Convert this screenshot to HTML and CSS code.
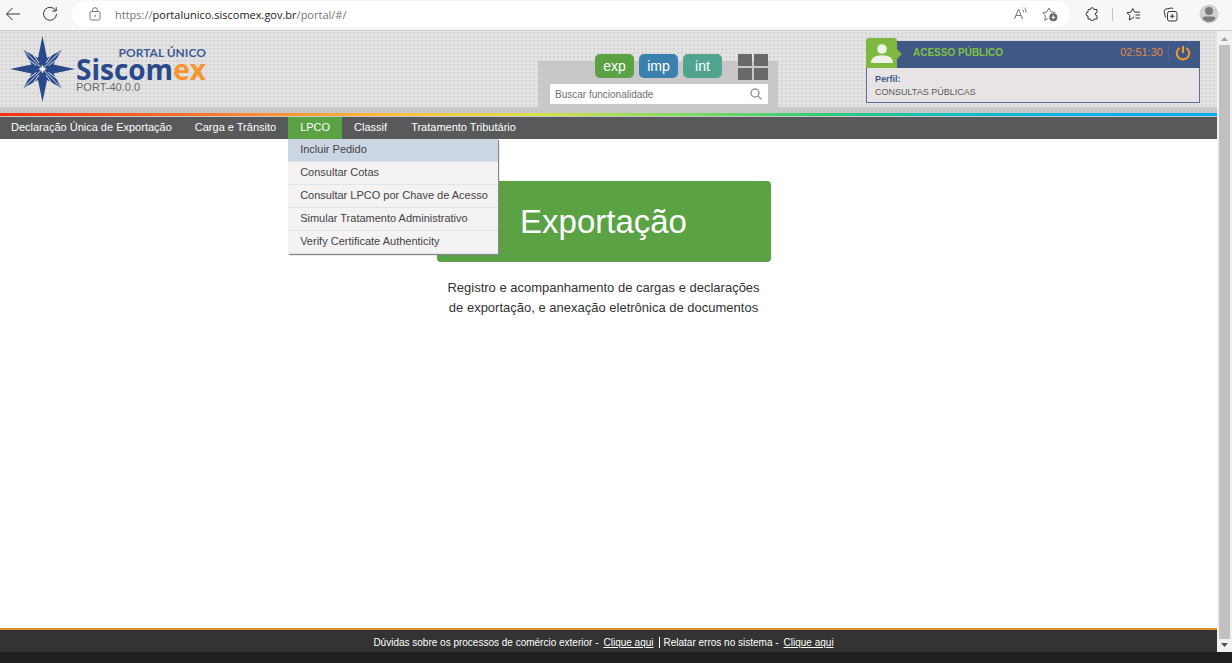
FILE: index.html
```html
<!DOCTYPE html>
<html lang="pt-BR">
<head>
<meta charset="utf-8">
<meta name="viewport" content="width=device-width, initial-scale=1">
<title>Portal Único Siscomex</title>
<link rel="stylesheet" href="styles.css">
</head>
<body>
<div class="browser-bar">
  <button class="icon-btn" type="button" aria-label="Voltar"><svg width="16" height="16" viewBox="0 0 16 16"><path d="M15 8H1.500M7.500 2L1.500 8l6 6"/></svg></button>
  <button class="icon-btn reload" type="button" aria-label="Atualizar"><svg width="16" height="16" viewBox="0 0 16 16"><path d="M13.600 4.500A6.500 6.500 0 1 0 14.500 8M14.200 1.200V5H10.200"/></svg></button>
  <div class="address">
    <svg class="lock" width="12" height="14" viewBox="0 0 12 14"><rect x="1" y="4.500" width="10" height="8.500" rx="1.500"/><path d="M3.500 4.500V3.200a2.500 2.500 0 0 1 5 0v1.300"/><circle cx="6" cy="9" r=".5"/></svg>
    <span class="url">https://<b>portalunico.siscomex.gov.br</b>/portal/#/</span>
    <button class="icon-btn muted" type="button" aria-label="Ler em voz alta"><svg width="16" height="16" viewBox="0 0 16 16"><path d="M2.500 13L6.500 3l4 10M4 9.500h5M10.500 3.500c.8.700 1.200 1.700 1.200 2.800M12 1.500c1.500 1.200 2.200 3 2 5"/></svg></button>
    <button class="icon-btn muted" type="button" aria-label="Adicionar aos favoritos"><svg width="16" height="16" viewBox="0 0 16 16"><path d="M6 12.500l-3.300 1.800.7-4.500L1 6.500l4-.6L7 2l2 3.900 4.300.6"/><circle cx="11.300" cy="11.300" r="4" fill="#666" stroke="none"/><path class="plus" d="M11.300 9.300v4M9.300 11.300h4"/></svg></button>
  </div>
  <button class="icon-btn" type="button" aria-label="Extensões"><svg width="14" height="14" viewBox="0 0 14 14"><path d="M4 2.500H5.500a1.800 1.800 0 0 1 3.600 0H12V5.500a1.600 1.600 0 0 0 0 3.200V12H9.100a1.800 1.800 0 0 1-3.600 0H3V9A1.900 1.900 0 0 1 3 5.200V3.500a1 1 0 0 1 1-1z"/></svg></button>
  <span class="bar-divider"></span>
  <button class="icon-btn" type="button" aria-label="Favoritos"><svg width="15" height="14" viewBox="0 0 15 14"><path d="M8 9.500L7.200 10.800 3.300 13l.7-4.200L1 5.700l4-.6L6.800 1.500l1.800 3.600H14M9.500 8H14M9.500 11H14"/></svg></button>
  <button class="icon-btn collections" type="button" aria-label="Coleções"><svg width="15" height="15" viewBox="0 0 15 15"><rect x="4.500" y="4.500" width="9.500" height="9.500" rx="2"/><path d="M2.500 10.500L1.200 4.500a2 2 0 0 1 1.500-2.300L8 1a2 2 0 0 1 2.300 1.300M9.250 7v4.500M7 9.250h4.500"/></svg></button>
  <button class="icon-btn" type="button" aria-label="Perfil do navegador"><svg width="20" height="20" viewBox="0 0 20 20"><circle cx="10" cy="10" r="9.500" fill="#d2d0ce" stroke="none"/><circle cx="10" cy="7" r="4" fill="#7c7a78" stroke="none"/><path d="M3.500 14.500Q3.500 12.500 6 12.500h8q2.500 0 2.500 2A8 8 0 0 1 3.500 14.500z" fill="#7c7a78" stroke="none"/></svg></button>
</div>

<div class="viewport">
  <div class="page">
    <header class="header">
      <a class="logo" href="#">
        <svg class="star" width="66" height="66" viewBox="0 0 66 66">
          <path fill="#29498b" d="M32.500 0L37 22 51.500 14 43.500 28.500 65 33 43.500 37.500 51.500 52 37 44 32.500 66 28 44 13.500 52 21.500 37.500 0 33 21.500 28.500 13.500 14 28 22z"/>
          <path d="M32.500 33L50 15.500M32.500 33L15 15.500M32.500 33L50 50.500M32.500 33L15 50.500M36 27L43 17M38.500 29.500L48 22.500M29 27L22 17M26.500 29.500L17 22.500M36 39L43 49M38.500 36.500L48 43.500M29 39L22 49M26.500 36.500L17 43.500" stroke="#e4e4e6" stroke-width="1"/>
          <path d="M32.500 28.500l1.300 3.200 3.200 1.300-3.200 1.300-1.300 3.200-1.300-3.200-3.200-1.300 3.200-1.300z" fill="#f2f2f2"/>
        </svg>
        <span class="brand">
          <span class="brand-top">PORTAL ÚNICO</span>
          <span class="brand-name">Siscom<em>ex</em></span>
          <span class="brand-version">PORT-40.0.0</span>
        </span>
      </a>
      <div class="panel">
        <div class="tools">
          <button class="tool exp" type="button">exp</button>
          <button class="tool imp" type="button">imp</button>
          <button class="tool int" type="button">int</button>
          <button class="tiles" type="button" aria-label="Módulos"><i></i><i></i><i></i><i></i></button>
        </div>
        <form class="search">
          <input type="text" aria-label="Buscar funcionalidade" placeholder="Buscar funcionalidade">
          <button type="button" aria-label="Buscar"><svg width="12" height="12" viewBox="0 0 12 12"><circle cx="5" cy="5" r="4"/><path d="M8 8l3.500 3.500"/></svg></button>
        </form>
      </div>
      <section class="user">
        <div class="user-bar">
          <span class="avatar"><svg width="22" height="19" viewBox="0 0 22 19"><circle cx="11" cy="5" r="4.800"/><path d="M0 19c0-5 3.500-7.800 11-7.800S22 14 22 19z"/></svg></span>
          <strong>ACESSO PÚBLICO</strong>
          <time>02:51:30</time>
          <button class="power" type="button" aria-label="Sair"><svg width="16" height="16" viewBox="0 0 16 16"><path d="M4.500 3a6.300 6.300 0 1 0 7 0M8 1v7"/></svg></button>
        </div>
        <div class="user-body"><b>Perfil:</b><span>CONSULTAS PÚBLICAS</span></div>
      </section>
    </header>
    <div class="rainbow"></div>
    <nav class="nav">
      <a href="#">Declaração Única de Exportação</a>
      <a href="#">Carga e Trânsito</a>
      <div class="nav-item">
        <a class="active" href="#">LPCO</a>
        <div class="menu">
          <a class="current" href="#">Incluir Pedido</a>
          <a href="#">Consultar Cotas</a>
          <a href="#">Consultar LPCO por Chave de Acesso</a>
          <a href="#">Simular Tratamento Administrativo</a>
          <a href="#">Verify Certificate Authenticity</a>
        </div>
      </div>
      <a href="#">Classif</a>
      <a href="#">Tratamento Tributário</a>
    </nav>
    <main class="content">
      <button class="hero" type="button">Exportação</button>
      <p>Registro e acompanhamento de cargas e declarações de exportação, e anexação eletrônica de documentos</p>
    </main>
    <footer class="footer">
      <span>Dúvidas sobre os processos de comércio exterior -</span>
      <a href="#">Clique aqui</a>
      <span class="second">Relatar erros no sistema -</span>
      <a href="#">Clique aqui</a>
    </footer>
  </div>
  <div class="scrollbar">
    <svg width="7" height="4" viewBox="0 0 7 4"><path d="M0 4L3.500 0 7 4z" fill="#a0a0a0"/></svg>
    <span class="thumb"></span>
    <svg width="7" height="4" viewBox="0 0 7 4"><path d="M0 0h7L3.500 4z" fill="#505050"/></svg>
  </div>
</div>
<div class="desktop-edge"></div>
</body>
</html>
```
FILE: styles.css
```css
* { box-sizing: border-box; }
body {
  margin: 0;
  min-height: 100vh;
  display: flex;
  flex-direction: column;
  background: #fff;
  color: #333;
  font-family: "Liberation Sans", Arial, sans-serif;
  font-size: 11px;
}
button, input { font: inherit; border: 0; padding: 0; margin: 0; background: none; }
a { color: inherit; text-decoration: none; }
svg { display: block; }

/* Browser toolbar */
.browser-bar {
  display: flex;
  align-items: center;
  height: 31px;
  padding: 0 13px 2px 5px;
  background: #f7f7f7;
  border-bottom: 1px solid #cfcfcf;
}
.icon-btn svg { fill: none; stroke: #333; stroke-width: 1; }
.icon-btn.muted svg { stroke: #777; }
.icon-btn .plus { stroke: #fff; }
.reload { margin-left: 21px; }
.address {
  flex: 1;
  display: flex;
  align-items: center;
  gap: 14px;
  height: 26px;
  margin: 0 16px 0 14px;
  padding: 0 11px 0 17px;
  border-radius: 13px;
  background: #fff;
}
.lock { fill: none; stroke: #777; }
.url { flex: 1; font-family: "Open Sans", "Noto Sans", sans-serif; font-size: 11px; color: #777; }
.url b { font-weight: 400; color: #222; }
.bar-divider { width: 1px; height: 13px; margin: 0 13px; background: #c4c4c4; }
.collections { margin: 0 21px 0 22px; }

/* Page and scrollbar */
.viewport { flex: 1; display: flex; }
.page { flex: 1; display: flex; flex-direction: column; }
.scrollbar {
  width: 15px;
  padding: 6px 0 5px;
  display: flex;
  flex-direction: column;
  align-items: center;
  gap: 4px;
  background: #f1f1f1;
}
.thumb { flex: 1; width: 11px; background: #c1c1c1; }
.desktop-edge { height: 11px; background: #202020; }

/* Header */
.header {
  display: flex;
  align-items: flex-start;
  padding: 5px 17px 0 10px;
  height: 76px;
  background-color: #e3e3e3;
  background-image: radial-gradient(circle at 2px 2px, #d3d3d3 1px, transparent 1px);
  background-size: 4px 4px;
}
.logo { display: flex; }
.brand { display: flex; flex-direction: column; padding-top: 11px; }
.brand-top {
  align-self: flex-end;
  font: 700 12px/11px Lato, sans-serif;
  color: #3f5c94;
}
.brand-name { margin-bottom: 1px; font: 700 28px/22px "Open Sans", sans-serif; color: #29498b; }
.brand-name em { font-style: normal; color: #f7942d; }
.brand-version { line-height: 12px; color: #6b6b6b; }
.panel {
  align-self: flex-end;
  width: 240px;
  margin: 0 88px 0 auto;
  padding: 0 10px 3px 12px;
  background: linear-gradient(transparent 7px, #c9c7c8 7px);
}
.tools { display: flex; justify-content: flex-end; gap: 5px; margin-bottom: 4px; }
.tool {
  width: 39px;
  height: 24px;
  padding-bottom: 1px;
  border-radius: 5px;
  color: #fff;
  font-size: 14px;
}
.exp { background: #5aa244; }
.imp { background: #3a82ad; }
.int { background: #50a490; }
.tiles { display: grid; grid-template-columns: 14px 14px; gap: 2px; margin-left: 11px; }
.tiles i { height: 12px; background: #69696b; }
.search { display: flex; align-items: center; height: 20px; padding: 0 6px 0 5px; background: #fff; }
.search input { flex: 1; min-width: 0; outline: 0; font-size: 10px; }
.search input::placeholder { color: #707070; opacity: 1; }
.search svg { fill: none; stroke: #999; stroke-width: 1.500; }

/* User box */
.user { width: 334px; margin-top: 2px; }
.user-bar {
  display: flex;
  align-items: center;
  height: 30px;
  padding-right: 9px;
  background: linear-gradient(transparent 3px, #3f5885 3px);
}
.avatar {
  position: relative;
  display: grid;
  place-items: center;
  width: 31px;
  height: 30px;
  border-radius: 3px 3px 0 0;
  background: #7eb93f;
}
.avatar svg { fill: #eef3e6; }
.avatar::after {
  content: "";
  position: absolute;
  left: 31px;
  top: 11px;
  border: 5px solid transparent;
  border-left-color: #7eb93f;
  border-right: 0;
}
.user-bar strong { margin: 0 auto 2px 16px; font-size: 10px; color: #7fc241; }
.user-bar time { margin-bottom: 2px; color: #e08b4a; }
.power { margin-left: 5px; padding-left: 6px; border-left: 1px solid #4f6690; }
.power svg { fill: none; stroke: #f59f22; stroke-width: 2; }
.user-body {
  display: flex;
  flex-direction: column;
  height: 35px;
  padding: 5px 8px 0;
  border: 1px solid #5c709c;
  border-top: 0;
  background: #e8e3e5;
  font-size: 9px;
  line-height: 13px;
  color: #5a5a5a;
}
.user-body b { color: #3f5885; }

/* Navigation */
.rainbow {
  height: 10px;
  background: linear-gradient(90deg, #f82d10, #fc8a35 21%, #fcc040 33%, #d8e04c 44%, #78dc60 57%, #2fcb78 68%, #10bfc0 78%, #05b3e8 88%, #05aeee) 0 6px / 100% 3px no-repeat #c9c7c8;
}
.nav { display: flex; height: 22px; background: #58595b; color: #fff; }
.nav > a, .nav-item > a { display: block; height: 22px; padding: 0 12px; line-height: 21px; }
.nav > a:first-child { padding: 0 11px; }
.nav-item { position: relative; }
.nav-item .active { background: #5aa244; }
.menu {
  position: absolute;
  z-index: 1;
  top: 22px;
  left: 0;
  width: max-content;
  background: #f4f2f3;
  color: #444;
  box-shadow: 1px 1px 1px #888;
}
.menu a { display: block; height: 23px; padding: 0 10px 0 12px; line-height: 21px; border-bottom: 1px solid #e2e5e8; }
.menu a.current { background: #ccd6e3; }

/* Main content */
.content {
  flex: 1;
  display: flex;
  flex-direction: column;
  align-items: center;
  padding-top: 42px;
}
.content, .footer { padding-right: 10px; }
.hero {
  width: 334px;
  height: 81px;
  border-radius: 4px;
  background: #5aa244;
  color: #fff;
  font-size: 33px;
}
.content p { width: 330px; margin: 16px 0 0; font-size: 13px; line-height: 20px; text-align: center; }
.footer {
  display: flex;
  justify-content: center;
  align-items: center;
  gap: 5px;
  height: 24px;
  padding-top: 2px;
  border-top: 2px solid #d8922b;
  background: #333;
  color: #fff;
  font-size: 10px;
}
.footer a { text-decoration: underline; }
.second { padding-left: 4px; border-left: 1px solid #fff; }
```
